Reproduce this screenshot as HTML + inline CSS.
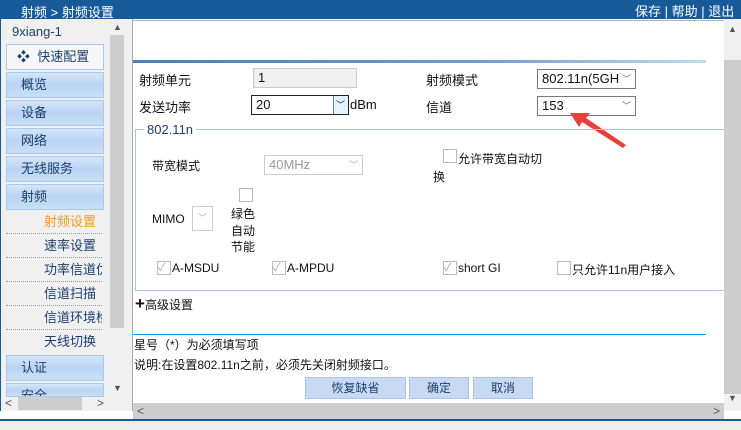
<html><head><style>
body{margin:0;width:741px;height:430px;overflow:hidden;background:#fff;font-family:"Liberation Sans","Noto Sans CJK SC",sans-serif;font-size:12px;color:#111;position:relative}
.a{position:absolute;white-space:nowrap}
.top{left:0;top:0;width:741px;height:19px;background:#175a9a;color:#fff;font-size:13px}
.nav{left:6px;width:96px;height:24px;border:1px solid #a9c8ee;background:linear-gradient(#d6e5f7,#b9d3f2 50%,#cadff6);color:#1d3f6e;font-size:13px;line-height:24px;text-indent:14px}
.sub{left:6px;width:96px;height:23px;border-bottom:1px dotted #999;color:#1d3f6e;font-size:13px;line-height:23px;text-indent:38px;overflow:hidden}
.sel{border:1px solid #7a7a7a;background:#fff;height:18px;line-height:18px;font-size:13px;text-indent:4px}
.cb{width:12px;height:12px;border:1px solid #bbb;background:#fff}
.btn{top:377px;height:20px;background:#c8daf3;border:1px solid #a9c4ea;color:#1d3f6e;text-align:center;line-height:20px;font-size:12px}
.ar{position:absolute;right:4px;top:0;color:#666;font-size:9px}
</style></head><body>
<div class="a top"><span class="a" style="left:21px;top:2px">射频 &gt; 射频设置</span><span class="a" style="left:635px;top:1px">保存 | 帮助 | 退出</span></div>
<div class="a" style="left:0;top:19px;width:124px;height:392px;background:#f0f0f0;border-left:1px solid #175a9a"></div>
<div class="a" style="left:109px;top:20px;width:15px;height:375px;background:#f0f0f0"></div>
<div class="a" style="left:110px;top:35px;width:14px;height:293px;background:#cdcdcd"></div>
<div class="a" style="left:113px;top:22px;font-size:9px;color:#555">▲</div>
<div class="a" style="left:113px;top:383px;font-size:9px;color:#555">▼</div>
<div class="a" style="left:1px;top:395px;width:123px;height:16px;background:#f0f0f0"></div>
<div class="a" style="left:18px;top:396px;width:64px;height:14px;background:#cdcdcd"></div>
<div class="a" style="left:5px;top:396px;color:#555">&lt;</div><div class="a" style="left:97px;top:396px;color:#555">&gt;</div>
<div class="a" style="left:12px;top:24px;font-size:13px;color:#1d3f6e">9xiang-1</div>
<div class="a nav" style="top:44px;background:#f7f7f7;text-indent:0"><span style="color:#1d3f6e;margin-left:10px">❖</span>&nbsp;&nbsp;快速配置</div>
<div class="a nav" style="top:72px">概览</div>
<div class="a nav" style="top:100px">设备</div>
<div class="a nav" style="top:128px">网络</div>
<div class="a nav" style="top:156px">无线服务</div>
<div class="a nav" style="top:184px">射频</div>
<div class="a sub" style="top:210px;color:#f59a1e">射频设置</div>
<div class="a sub" style="top:234px">速率设置</div>
<div class="a sub" style="top:258px">功率信道优化</div>
<div class="a sub" style="top:282px">信道扫描</div>
<div class="a sub" style="top:306px">信道环境检测</div>
<div class="a sub" style="top:330px;border:0">天线切换</div>
<div class="a nav" style="top:355px">认证</div>
<div class="a nav" style="top:383px;height:12px;overflow:hidden">安全</div>
<div class="a" style="left:124px;top:19px;width:8px;height:392px;background:#f0f0f0"></div>
<div class="a" style="left:132px;top:19px;width:1px;height:392px;background:#aaa"></div>
<div class="a" style="left:724px;top:19px;width:17px;height:392px;background:#f0f0f0"></div>
<div class="a" style="left:724px;top:60px;width:17px;height:334px;background:#cdcdcd"></div>
<div class="a" style="left:728px;top:24px;font-size:9px;color:#555">▲</div>
<div class="a" style="left:728px;top:393px;font-size:9px;color:#555">▼</div>
<div class="a" style="left:133px;top:403px;width:591px;height:16px;background:#cdcdcd"></div>
<div class="a" style="left:137px;top:404px;color:#555">&lt;</div><div class="a" style="left:713px;top:404px;color:#555">&gt;</div>
<div class="a" style="left:0;top:419px;width:741px;height:2px;background:#175a9a"></div>
<div class="a" style="left:0;top:421px;width:741px;height:9px;background:#eee"></div>
<div class="a" style="left:133px;top:20px;width:591px;height:1px;background:#9bb7d6"></div>
<div class="a" style="left:133px;top:60px;width:573px;height:3px;background:linear-gradient(90deg,#4c7fb8,#6f9bcc 60%,#c6d8ec)"></div>
<div class="a" style="left:139px;top:70px;font-size:13px">射频单元</div>
<div class="a" style="left:253px;top:68px;width:104px;height:20px;background:#f0f0f0;border:1px solid #ccc;box-sizing:border-box;font-size:13px;line-height:18px;text-indent:4px">1</div>
<div class="a" style="left:139px;top:97px;font-size:13px">发送功率</div>
<div class="a sel" style="left:251px;top:95px;width:96px;border-color:#222">20<span style="position:absolute;right:0;top:0;width:14px;height:18px;border-left:1px solid #3a86d2;background:#e5f1fb;text-indent:2px;font-size:9px">﹀</span></div>
<div class="a" style="left:350px;top:97px;font-size:13px">dBm</div>
<div class="a" style="left:426px;top:70px;font-size:13px">射频模式</div>
<div class="a sel" style="left:537px;top:69px;width:97px">802.11n(5GH<span class="ar">﹀</span></div>
<div class="a" style="left:426px;top:97px;font-size:13px">信道</div>
<div class="a sel" style="left:537px;top:96px;width:97px">153<span class="ar">﹀</span></div>
<svg class="a" style="left:560px;top:105px" width="70" height="45"><polygon points="10,8 30,8 26,13 66,40 63,43 22,17 19,22" fill="#e8403a"/></svg>
<div class="a" style="left:135px;top:129px;width:588px;height:160px;border:1px solid #a9c4e4;border-right:0"></div>
<div class="a" style="left:144px;top:122px;background:#fff;padding:0 3px;color:#1d3f6e;font-size:13px">802.11n</div>
<div class="a" style="left:152px;top:157px;font-size:12px">带宽模式</div>
<div class="a sel" style="left:264px;top:155px;width:97px;border-color:#ccc;color:#999">40MHz<span class="ar" style="color:#aaa">﹀</span></div>
<div class="a cb" style="left:443px;top:149px"></div>
<div class="a" style="left:458px;top:150px">允许带宽自动切</div>
<div class="a" style="left:433px;top:168px">换</div>
<div class="a cb" style="left:239px;top:188px"></div>
<div class="a" style="left:231px;top:206px;line-height:16.5px">绿色<br>自动<br>节能</div>
<div class="a" style="left:152px;top:212px;font-size:12px">MIMO</div>
<div class="a" style="left:192px;top:206px;width:19px;height:23px;border:1px solid #ccc;color:#aaa;font-size:9px;text-align:center;line-height:23px">﹀</div>
<div class="a cb" style="left:157px;top:261px;color:#aaa;font-size:11px;line-height:12px">✓</div><div class="a" style="left:172px;top:261px">A-MSDU</div>
<div class="a cb" style="left:272px;top:261px;color:#aaa;font-size:11px;line-height:12px">✓</div><div class="a" style="left:287px;top:261px">A-MPDU</div>
<div class="a cb" style="left:443px;top:261px;color:#aaa;font-size:11px;line-height:12px">✓</div><div class="a" style="left:458px;top:261px">short GI</div>
<div class="a cb" style="left:557px;top:261px"></div><div class="a" style="left:572px;top:261px">只允许11n用户接入</div>
<div class="a" style="left:135px;top:296px;font-size:12px"><b style="font-size:17px;line-height:14px">+</b>高级设置</div>
<div class="a" style="left:133px;top:334px;width:573px;height:1px;background:#0aa0e8"></div>
<div class="a" style="left:134px;top:336px">星号（*）为必须填写项</div>
<div class="a" style="left:134px;top:356px">说明:在设置802.11n之前，必须先关闭射频接口。</div>
<div class="a btn" style="left:305px;width:99px">恢复缺省</div>
<div class="a btn" style="left:409px;width:58px">确定</div>
<div class="a btn" style="left:473px;width:58px">取消</div>
</body></html>
